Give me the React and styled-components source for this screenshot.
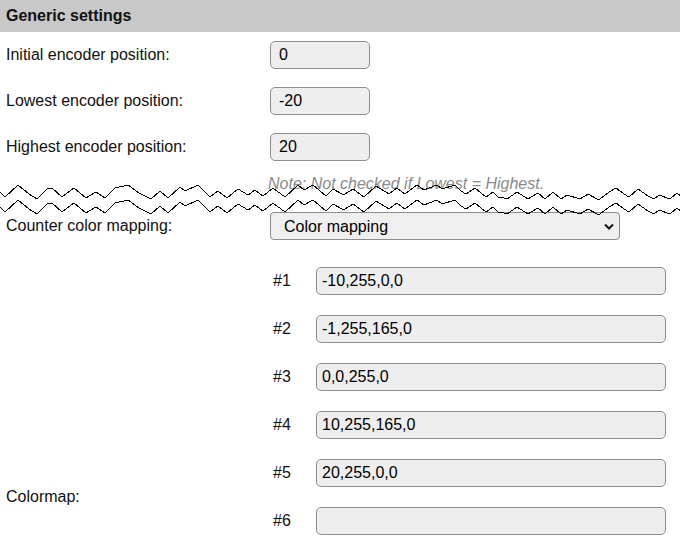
import React from "react";
import styled, { createGlobalStyle } from "styled-components";

const Global = createGlobalStyle`
  html, body { margin: 0; padding: 0; background: #fff; }
  body { font-family: "Liberation Sans", Arial, sans-serif; font-size: 16px; color: #111; }
  * { box-sizing: border-box; }
`;

const Page = styled.div`
  position: relative;
  width: 680px;
`;

const Header = styled.div`
  height: 32px;
  line-height: 32px;
  background: #c8c8c8;
  padding-left: 6px;
  font-weight: bold;
  font-size: 16px;
  color: #111;
`;

const Row = styled.div`
  display: flex;
  align-items: center;
  padding: 9px 0;
`;

const Label = styled.div`
  width: 270px;
  padding-left: 6px;
  flex: none;
`;

const TextInput = styled.input`
  font-family: "Liberation Sans", Arial, sans-serif;
  font-size: 16px;
  color: #000;
  width: ${(p) => p.$w}px;
  height: 28px;
  padding: 0 0 0 ${(p) => p.$pad}px;
  border: 1px solid #8d8d8d;
  border-radius: 5px;
  background: #eeeeee;
  outline: none;
`;

const Note = styled.div`
  height: 33px;
  padding: 5px 0 0 268px;
  line-height: 18px;
  font-style: italic;
  color: #8a8a8a;
`;

const SelectWrap = styled.div`
  position: relative;
  width: 350px;
  height: 28px;
`;

const Select = styled.select`
  appearance: none;
  -webkit-appearance: none;
  width: 100%;
  height: 28px;
  font-family: "Liberation Sans", Arial, sans-serif;
  font-size: 16px;
  color: #000;
  padding: 0 0 0 13px;
  border: 1px solid #8d8d8d;
  border-radius: 4px;
  background: #efefef;
  outline: none;
`;

const Chevron = styled.svg`
  position: absolute;
  right: 6px;
  top: 11px;
  pointer-events: none;
`;

const MapSection = styled.div`
  display: flex;
  margin-top: 8px;
`;

const MapLabel = styled.div`
  width: 270px;
  padding-left: 6px;
  flex: none;
  align-self: center;
`;

const MapList = styled.div`
  display: flex;
  flex-direction: column;
`;

const MapRow = styled.div`
  display: flex;
  align-items: center;
  padding: 10px 0;
`;

const Num = styled.div`
  width: 46px;
  padding-left: 3px;
  flex: none;
`;

const Tear = styled.svg`
  position: absolute;
  left: 0;
  top: 178px;
  pointer-events: none;
`;

function wavePath(width, seed) {
  let s = seed;
  const rand = () => {
    s = (s * 16807) % 2147483647;
    return s / 2147483647;
  };
  let x = 0;
  let y = 0;
  let dir = 1;
  const pts = [[0, 0]];
  while (x < width) {
    const len = 5 + rand() * 8;
    const slope = 0.6 + rand() * 0.4;
    let ny = y + dir * len * slope;
    if (ny > 7) ny = 7;
    if (ny < -7) ny = -7;
    x += len;
    y = ny;
    pts.push([x, y]);
    if (rand() < 0.1) {
      x += 2 + rand() * 3;
      pts.push([x, y]);
    }
    if (y >= 6) dir = -1;
    else if (y <= -6) dir = 1;
    else if (rand() < 0.8) dir = -dir;
  }
  return pts.map((p, i) => `${i ? "L" : "M"}${p[0].toFixed(0)} ${p[1].toFixed(0)}`).join(" ");
}

const colormap = ["-10,255,0,0", "-1,255,165,0", "0,0,255,0", "10,255,165,0", "20,255,0,0", "", "", "", "", ""];

export default function App() {
  const d = wavePath(690, 4242);
  return (
    <Page>
      <Global />
      <Header>Generic settings</Header>
      <Row>
        <Label>Initial encoder position:</Label>
        <TextInput $w={100} $pad={8} defaultValue="0" />
      </Row>
      <Row>
        <Label>Lowest encoder position:</Label>
        <TextInput $w={100} $pad={8} defaultValue="-20" />
      </Row>
      <Row>
        <Label>Highest encoder position:</Label>
        <TextInput $w={100} $pad={8} defaultValue="20" />
      </Row>
      <Note>Note: Not checked if Lowest = Highest.</Note>
      <Row>
        <Label>Counter color mapping:</Label>
        <SelectWrap>
          <Select defaultValue="map">
            <option value="map">Color mapping</option>
          </Select>
          <Chevron width="10" height="7" viewBox="0 0 10 7">
            <path d="M1 1.5 L5 5.5 L9 1.5" fill="none" stroke="#111" strokeWidth="2" />
          </Chevron>
        </SelectWrap>
      </Row>
      <MapSection>
        <MapLabel>Colormap:</MapLabel>
        <MapList>
          {colormap.map((v, i) => (
            <MapRow key={i}>
              <Num>#{i + 1}</Num>
              <TextInput $w={350} $pad={5} defaultValue={v} />
            </MapRow>
          ))}
        </MapList>
      </MapSection>
      <Tear width="680" height="40" viewBox="0 0 680 40">
        <g fill="none" stroke="#000" strokeWidth="1" shapeRendering="crispEdges">
          <path d={d} transform="translate(0 14)" />
          <path d={d} transform="translate(0 29)" />
        </g>
      </Tear>
    </Page>
  );
}
